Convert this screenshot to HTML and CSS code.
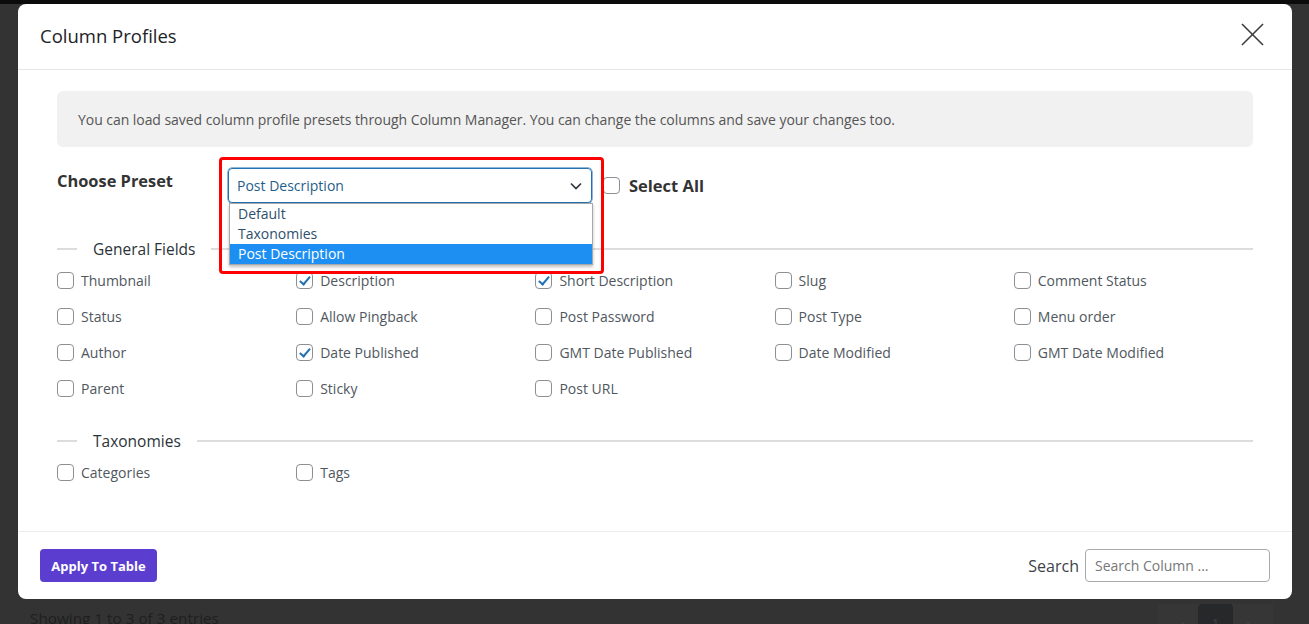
FILE: index.html
```html
<!DOCTYPE html>
<html lang="en">
<head>
<meta charset="UTF-8" />
<title>Column Profiles</title>
<link rel="stylesheet" href="styles.css">
</head>
<body>
<div class="topbar"></div>

<div class="modal" role="dialog" aria-labelledby="modal-title">
  <header class="modal-header">
    <h2 id="modal-title">Column Profiles</h2>
    <button class="btn-close" aria-label="Close">
      <svg viewBox="0 0 24 24" aria-hidden="true"><path d="M1 1 L23 23 M23 1 L1 23" /></svg>
    </button>
  </header>

  <div class="modal-body">
    <div class="notice">You can load saved column profile presets through Column Manager. You can change the columns and save your changes too.</div>

    <div class="preset-row">
      <div class="preset-label">Choose Preset</div>
      <div class="select-wrap">
        <div class="select-box">
          <span>Post Description</span>
          <svg class="chevron" viewBox="0 0 12 8" aria-hidden="true"><path d="M1 1.5 L6 6.5 L11 1.5" /></svg>
        </div>
        <ul class="select-list">
          <li>Default</li>
          <li>Taxonomies</li>
          <li class="active">Post Description</li>
        </ul>
        <div class="highlight-frame"></div>
      </div>
      <label class="select-all"><input type="checkbox" /> Select All</label>
    </div>

    <div class="group-title"><span>General Fields</span></div>
    <div class="field-grid">
      <label class="field"><input type="checkbox" />Thumbnail</label>
      <label class="field"><input type="checkbox" checked />Description</label>
      <label class="field"><input type="checkbox" checked />Short Description</label>
      <label class="field"><input type="checkbox" />Slug</label>
      <label class="field"><input type="checkbox" />Comment Status</label>

      <label class="field"><input type="checkbox" />Status</label>
      <label class="field"><input type="checkbox" />Allow Pingback</label>
      <label class="field"><input type="checkbox" />Post Password</label>
      <label class="field"><input type="checkbox" />Post Type</label>
      <label class="field"><input type="checkbox" />Menu order</label>

      <label class="field"><input type="checkbox" />Author</label>
      <label class="field"><input type="checkbox" checked />Date Published</label>
      <label class="field"><input type="checkbox" />GMT Date Published</label>
      <label class="field"><input type="checkbox" />Date Modified</label>
      <label class="field"><input type="checkbox" />GMT Date Modified</label>

      <label class="field"><input type="checkbox" />Parent</label>
      <label class="field"><input type="checkbox" />Sticky</label>
      <label class="field"><input type="checkbox" />Post URL</label>
    </div>

    <div class="group-title"><span>Taxonomies</span></div>
    <div class="field-grid">
      <label class="field"><input type="checkbox" />Categories</label>
      <label class="field"><input type="checkbox" />Tags</label>
    </div>
  </div>

  <footer class="modal-footer">
    <button class="btn-apply">Apply To Table</button>
    <label class="search">Search <input type="text" placeholder="Search Column ..." /></label>
  </footer>
</div>

<div class="page-bottom">
  <div class="entries">Showing 1 to 3 of 3 entries</div>
  <div class="pager">
    <span class="pager-arrow">&lsaquo;</span>
    <span class="pager-num">1</span>
    <span class="pager-arrow">&rsaquo;</span>
  </div>
</div>
</body>
</html>
```

FILE: styles.css
```css
/* Base */
* {
  box-sizing: border-box;
}
html, body {
  height: 100%;
  overflow: hidden;
}
body {
  margin: 0;
  font-family: "Open Sans", sans-serif;
  background: #333333;
  color: #333;
}
button, input {
  font-family: inherit;
}

.topbar {
  height: 4px;
  background: #0b0b0b;
}

/* Modal */
.modal {
  margin: 0 17px 0 18px;
  height: 595px;
  background: #fff;
  border-radius: 8px;
  display: flex;
  flex-direction: column;
}
.modal-header {
  height: 66px;
  border-bottom: 1px solid #e6e6e6;
  display: flex;
  align-items: center;
  justify-content: space-between;
  padding: 0 28px 3px 22px;
}
.modal-header h2 {
  margin: 0;
  font-size: 18.5px;
  font-weight: 400;
  color: #1d2327;
}
.btn-close {
  background: none;
  border: none;
  padding: 0;
  width: 24px;
  height: 24px;
  cursor: pointer;
}
.btn-close svg {
  width: 23px;
  height: 23px;
  stroke: #3c3c3c;
  stroke-width: 1.6;
  fill: none;
}

.modal-body {
  flex: 1;
  padding: 21px 39px 0 39px;
}
.notice {
  background: #f1f1f1;
  border-radius: 6px;
  height: 56px;
  display: flex;
  align-items: center;
  padding: 0 21px;
  font-size: 14px;
  letter-spacing: -0.05px;
  color: #555;
}

/* Preset row */
.preset-row {
  display: flex;
  align-items: flex-start;
  margin-top: 21px;
}
.preset-label {
  width: 171px;
  padding-top: 2px;
  font-size: 16.4px;
  line-height: 22px;
  font-weight: 700;
  color: #333;
}
.select-wrap {
  position: relative;
  width: 364px;
}
.select-box {
  height: 35px;
  border: 1px solid #2271b1;
  box-shadow: 0 0 0 0.5px #2271b1;
  border-radius: 4px;
  display: flex;
  align-items: center;
  justify-content: space-between;
  padding: 0 9px 0 8px;
  font-size: 14px;
  color: #1f5e8a;
}
.chevron {
  width: 12px;
  height: 8px;
  stroke: #2c3338;
  stroke-width: 1.6;
  fill: none;
}
.select-list {
  position: absolute;
  top: 35px;
  left: 1px;
  width: 364px;
  margin: 0;
  padding: 0;
  list-style: none;
  background: #fff;
  border: 1px solid #a8a8a8;
  box-shadow: 0 2px 3px rgb(0 0 0 / 0.25);
  font-size: 14px;
  color: #2d4f6c;
  z-index: 2;
}
.select-list li {
  height: 20px;
  line-height: 20px;
  padding-left: 8px;
}
.select-list li.active {
  background: #1e8ff2;
  color: #fff;
}
.highlight-frame {
  position: absolute;
  top: -11px;
  left: -9px;
  width: 385px;
  height: 117px;
  border: 3px solid #ff0000;
  border-radius: 4px;
  pointer-events: none;
  z-index: 3;
}
.select-all {
  height: 35px;
  margin-left: 11px;
  display: flex;
  align-items: center;
  gap: 9px;
  font-size: 16.5px;
  font-weight: 700;
  color: #333;
}

/* Checkboxes */
input[type="checkbox"] {
  appearance: none;
  margin: 0;
  width: 17px;
  height: 17px;
  border: 1px solid #8c8f94;
  border-radius: 4px;
  background: #fff;
  position: relative;
  flex: none;
}
input[type="checkbox"]:checked::before {
  content: "";
  position: absolute;
  left: 5px;
  top: 1px;
  width: 4px;
  height: 9px;
  border-right: 2px solid #2271b1;
  border-bottom: 2px solid #2271b1;
  transform: rotate(40deg);
}

/* Field groups */
.group-title {
  display: flex;
  align-items: center;
  height: 20px;
  margin-top: 36px;
  font-size: 15.5px;
  color: #2c3338;
}
.group-title::before {
  content: "";
  width: 20px;
  height: 2px;
  background: #dcdcdc;
  margin-right: 16px;
}
.group-title::after {
  content: "";
  flex: 1;
  height: 2px;
  background: #dcdcdc;
  margin-left: 16px;
}
.field-grid + .group-title {
  margin-top: 25px;
}
.field-grid {
  display: grid;
  grid-template-columns: repeat(5, 1fr);
  margin-top: 3px;
}
.field {
  height: 36px;
  display: flex;
  align-items: center;
  gap: 7px;
  font-size: 14px;
  color: #50575e;
}

/* Footer */
.modal-footer {
  height: 68px;
  border-top: 1px solid #ececec;
  display: flex;
  align-items: flex-start;
  justify-content: space-between;
  padding: 17px 22px 0 22px;
}
.btn-apply {
  height: 33px;
  width: 117px;
  border: none;
  border-radius: 4px;
  background: #5b3dd0;
  color: #fff;
  font-size: 13px;
  font-weight: 700;
  cursor: pointer;
}
.search {
  display: flex;
  align-items: center;
  gap: 6px;
  font-size: 16px;
  color: #3c434a;
}
.search input {
  width: 185px;
  height: 33px;
  border: 1px solid #a7aaad;
  border-radius: 4px;
  padding: 0 9px;
  font-size: 14px;
  color: #333;
}
.search input::placeholder {
  color: #777;
}

/* Page behind the overlay */
.page-bottom {
  display: flex;
  justify-content: space-between;
  padding: 8px 36px 0 30px;
}
.entries {
  font-size: 15.3px;
  line-height: 22px;
  color: #1f1f1f;
}
.pager {
  display: flex;
  align-items: flex-start;
  margin-top: -3px;
  padding: 0 8px;
  background: #363636;
  height: 30px;
}
.pager-arrow {
  width: 32px;
  text-align: center;
  font-size: 18px;
  color: #444;
  padding-top: 8px;
}
.pager-num {
  width: 35px;
  height: 30px;
  background: #262829;
  border-radius: 4px;
  text-align: center;
  font-size: 14px;
  color: #404040;
  padding-top: 10px;
}
```
